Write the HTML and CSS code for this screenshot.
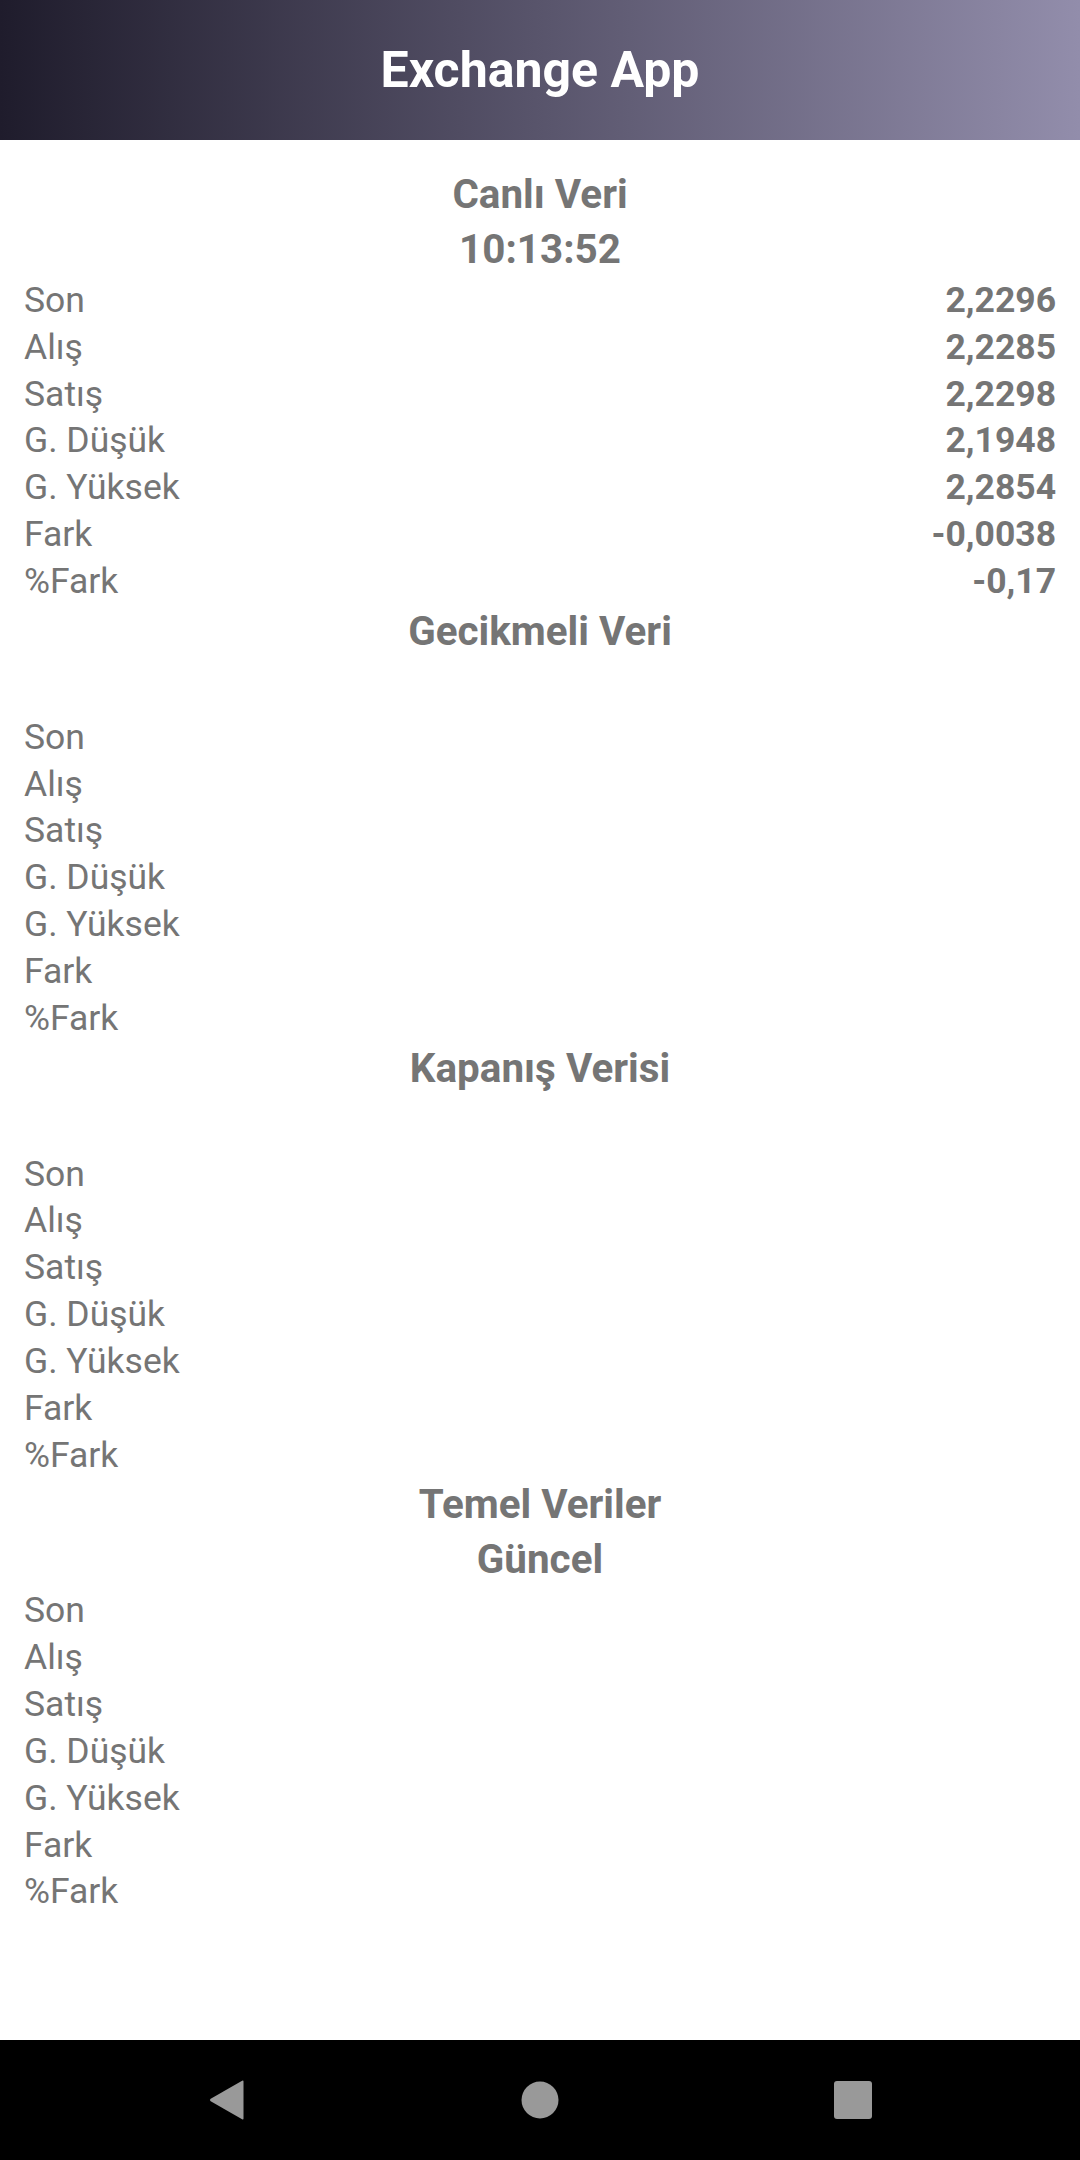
FILE: index.html
```html
<!DOCTYPE html>
<html lang="tr">
<head>
<meta charset="utf-8">
<title>Exchange App</title>
<link rel="stylesheet" href="styles.css">
</head>
<body>
<div class="app">
  <header class="appbar"><h1 class="appbar-title">Exchange App</h1></header>
  <main class="content">
    <section class="block">
      <div class="block-head"><div class="head-line">Canlı Veri</div><div class="head-line">10:13:52</div></div>
      <div class="row"><span class="label">Son</span><span class="value">2,2296</span></div>
      <div class="row"><span class="label">Alış</span><span class="value">2,2285</span></div>
      <div class="row"><span class="label">Satış</span><span class="value">2,2298</span></div>
      <div class="row"><span class="label">G. Düşük</span><span class="value">2,1948</span></div>
      <div class="row"><span class="label">G. Yüksek</span><span class="value">2,2854</span></div>
      <div class="row"><span class="label">Fark</span><span class="value">-0,0038</span></div>
      <div class="row"><span class="label">%Fark</span><span class="value">-0,17</span></div>
    </section>
    <section class="block">
      <div class="block-head"><div class="head-line">Gecikmeli Veri</div><div class="head-line"></div></div>
      <div class="row"><span class="label">Son</span><span class="value"></span></div>
      <div class="row"><span class="label">Alış</span><span class="value"></span></div>
      <div class="row"><span class="label">Satış</span><span class="value"></span></div>
      <div class="row"><span class="label">G. Düşük</span><span class="value"></span></div>
      <div class="row"><span class="label">G. Yüksek</span><span class="value"></span></div>
      <div class="row"><span class="label">Fark</span><span class="value"></span></div>
      <div class="row"><span class="label">%Fark</span><span class="value"></span></div>
    </section>
    <section class="block">
      <div class="block-head"><div class="head-line">Kapanış Verisi</div><div class="head-line"></div></div>
      <div class="row"><span class="label">Son</span><span class="value"></span></div>
      <div class="row"><span class="label">Alış</span><span class="value"></span></div>
      <div class="row"><span class="label">Satış</span><span class="value"></span></div>
      <div class="row"><span class="label">G. Düşük</span><span class="value"></span></div>
      <div class="row"><span class="label">G. Yüksek</span><span class="value"></span></div>
      <div class="row"><span class="label">Fark</span><span class="value"></span></div>
      <div class="row"><span class="label">%Fark</span><span class="value"></span></div>
    </section>
    <section class="block">
      <div class="block-head"><div class="head-line">Temel Veriler</div><div class="head-line">Güncel</div></div>
      <div class="row"><span class="label">Son</span><span class="value"></span></div>
      <div class="row"><span class="label">Alış</span><span class="value"></span></div>
      <div class="row"><span class="label">Satış</span><span class="value"></span></div>
      <div class="row"><span class="label">G. Düşük</span><span class="value"></span></div>
      <div class="row"><span class="label">G. Yüksek</span><span class="value"></span></div>
      <div class="row"><span class="label">Fark</span><span class="value"></span></div>
      <div class="row"><span class="label">%Fark</span><span class="value"></span></div>
    </section>
  </main>
  <nav class="navbar">
    <svg class="nav-icon" width="36" height="40" viewBox="0 0 36 40"><path d="M34.5 1.5 Q34.5 0 33.1 0.8 L1.7 18.8 Q0 20 1.7 21.2 L33.1 39.2 Q34.5 40 34.5 38.5 Z" fill="#999999"/></svg>
    <svg class="nav-icon" width="38" height="38" viewBox="0 0 38 38"><circle cx="19" cy="19" r="18.5" fill="#999999"/></svg>
    <svg class="nav-icon" width="38" height="38" viewBox="0 0 38 38"><rect x="0" y="0" width="38" height="38" rx="3" fill="#999999"/></svg>
  </nav>
</div>
</body>
</html>
```
FILE: styles.css
```css
html, body {
  margin: 0;
  padding: 0;
  background: #ffffff;
}

.app {
  width: 1080px;
  height: 2160px;
  display: flex;
  flex-direction: column;
  font-family: Roboto, "Noto Sans", "Liberation Sans", sans-serif;
  color: #757575;
}

.appbar {
  height: 140px;
  flex: 0 0 140px;
  display: flex;
  align-items: center;
  justify-content: center;
  background: linear-gradient(90deg, #1f1c2c 0%, #928dab 100%);
}

.appbar-title {
  margin: 0;
  color: #ffffff;
  font-size: 50px;
  font-weight: 700;
  line-height: 1;
}

.content {
  flex: 1;
  padding: 28px 24px 0 24px;
  display: flex;
  flex-direction: column;
}

.block-head {
  display: flex;
  flex-direction: column;
  align-items: center;
}

.head-line {
  height: 54.5px;
  line-height: 54.5px;
  font-size: 40.4px;
  font-weight: 700;
  text-align: center;
}

.row {
  display: flex;
  justify-content: space-between;
  height: 46.84px;
  line-height: 46.84px;
  font-size: 35.5px;
}

.value {
  font-weight: 700;
}

.navbar {
  height: 120px;
  flex: 0 0 120px;
  background: #000000;
  display: grid;
  grid-template-columns: repeat(3, 313px);
  justify-content: center;
  align-items: center;
  justify-items: center;
}

.nav-icon {
  display: block;
}
```
